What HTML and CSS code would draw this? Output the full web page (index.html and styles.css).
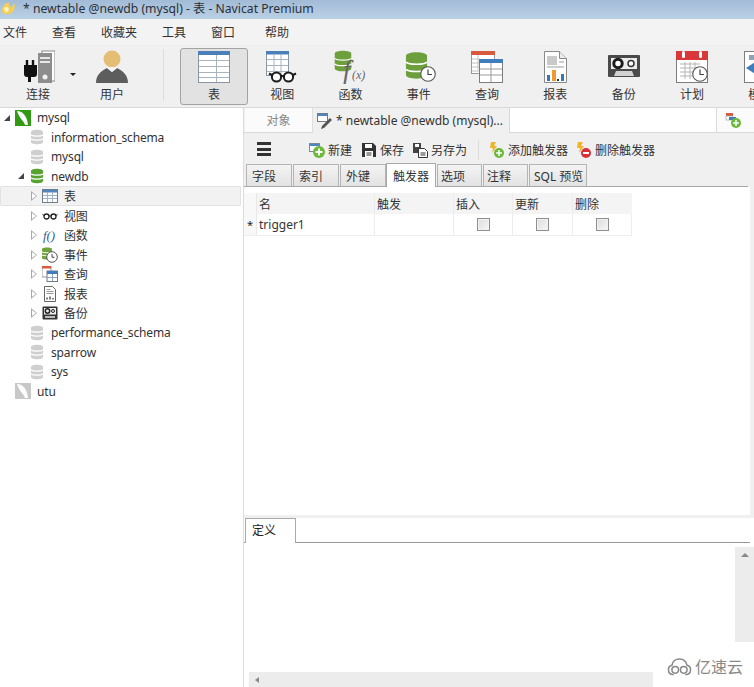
FILE: index.html
```html
<!DOCTYPE html>
<html lang="zh">
<head>
<meta charset="utf-8">
<title>Navicat Premium</title>
<link rel="stylesheet" href="styles.css">
</head>
<body>
<svg class="sprite" xmlns="http://www.w3.org/2000/svg">
  <symbol id="db" viewBox="0 0 16 16">
    <path d="M2 3c0-3 12-3 12 0v10c0 3-12 3-12 0z" fill="currentColor"/>
    <path d="M2 6c2 1.600 10 1.600 12 0M2 10c2 1.600 10 1.600 12 0" fill="none" stroke="#fff" stroke-width="1.200"/>
  </symbol>
  <symbol id="mini-table" viewBox="0 0 16 16">
    <rect x=".5" y="1.500" width="15" height="13" fill="#fff" stroke="#6f7c8a"/>
    <rect x="1" y="2" width="14" height="2.500" fill="#4f86bd"/>
    <path d="M1 7.500h14M1 10.500h14M5.500 4v10M10.500 4v10" stroke="#9fb3c8"/>
  </symbol>
  <symbol id="mini-glasses" viewBox="0 0 16 16">
    <circle cx="4.500" cy="8.500" r="2.500" fill="none" stroke="#222" stroke-width="1.300"/>
    <circle cx="11.500" cy="8.500" r="2.500" fill="none" stroke="#222" stroke-width="1.300"/>
    <path d="M7 8h2M2 7.500L.5 6.500M14 7.500l1.500-1" stroke="#222"/>
  </symbol>
  <symbol id="mini-clock" viewBox="0 0 16 16">
    <path d="M0 2c0-2 10-2 10 0v9c0 2-10 2-10 0z" fill="#6ea33c"/>
    <path d="M0 5c2 1 8 1 10 0M0 8c2 1 8 1 10 0" stroke="#fff" fill="none"/>
    <circle cx="10" cy="10" r="5.300" fill="#fff" stroke="#555"/>
    <path d="M10 7v3.300h2.500" fill="none" stroke="#444"/>
  </symbol>
  <symbol id="mini-query" viewBox="0 0 16 16">
    <rect x="0" y="0" width="9" height="11" fill="#fff" stroke="#999"/>
    <rect x="0" y="0" width="9" height="2.500" fill="#d9593f"/>
    <rect x="5" y="5" width="10.500" height="10.500" fill="#fff" stroke="#6f7c8a"/>
    <rect x="5" y="5" width="11" height="3" fill="#3f7dbd"/>
    <path d="M10.500 8v7M5 11.500h10" stroke="#8fa3b8"/>
  </symbol>
  <symbol id="mini-report" viewBox="0 0 16 16">
    <path d="M2.500.5h8l3 3v12h-11z" fill="#fff" stroke="#666"/>
    <path d="M4.500 3.500h4M4.500 5.500h7M4.500 7.500h7" stroke="#999"/>
    <path d="M5 13.500v-2M8 13.500v-3M11 13.500v-1.500" stroke="#555" stroke-width="1.500"/>
  </symbol>
  <symbol id="mini-backup" viewBox="0 0 16 16">
    <rect x=".5" y="1.500" width="15" height="13" rx="1" fill="#333"/>
    <rect x="2" y="3" width="12" height="6.500" fill="#eee"/>
    <circle cx="5.500" cy="6" r="2.200" fill="none" stroke="#222" stroke-width="1.500"/>
    <circle cx="11" cy="6" r="1.500" fill="none" stroke="#222"/>
    <rect x="3" y="11" width="10" height="2" fill="#bbb"/>
  </symbol>
  <symbol id="leaf" viewBox="0 0 16 16">
    <rect width="16" height="16" fill="currentColor"/>
    <path d="M2 1c5 0 10 4 11 14h-3C9 11 4 8 2 1z" fill="#fff"/>
  </symbol>
  <symbol id="big-db" viewBox="0 0 24 28">
    <path d="M1 4c0-5 22-5 22 0v20c0 5-22 5-22 0z" fill="#6e9f3d"/>
    <path d="M1 10.500c3 3 19 3 22 0M1 18c3 3 19 3 22 0" fill="none" stroke="#fff" stroke-width="1.600"/>
  </symbol>
  <symbol id="big-clock" viewBox="0 0 16 16">
    <circle cx="8" cy="8" r="7.300" fill="#fff" stroke="#555" stroke-width="1.100"/>
    <path d="M8 3.500V8.500h4" fill="none" stroke="#444" stroke-width="1.200"/>
  </symbol>
  <symbol id="plus" viewBox="0 0 12 12">
    <circle cx="6" cy="6" r="6" fill="#6cb83a"/>
    <path d="M6 2.500v7M2.500 6h7" stroke="#fff" stroke-width="1.800"/>
  </symbol>
</svg>

<div class="app">
  <header class="titlebar">
    <svg class="title-logo" viewBox="0 0 16 16"><path d="M1 11C1 5 5 1 9 2c-1 2 0 3 1 4 2 0 4-2 4-4 2 4 0 11-6 12-4 .5-7-1-7-3z" fill="#f1cf5a"/><path d="M3 8c2-2 4-2 5 0s-1 4-3 4" fill="#fff3bf"/></svg>
    <span class="title-text">* newtable @newdb (mysql) - 表 - Navicat Premium</span>
  </header>

  <nav class="menubar">
    <span>文件</span><span>查看</span><span>收藏夹</span><span>工具</span><span>窗口</span><span class="menu-last">帮助</span>
  </nav>

  <div class="toolbar">
    <div class="tool tool-connect">
      <svg class="tool-icon" viewBox="0 0 34 34">
        <rect x="21" y="1" width="13" height="30" fill="#fff" stroke="#8a8a8a"/>
        <rect x="17" y="3" width="14" height="30" fill="#8d8d8d"/>
        <rect x="19" y="7" width="10" height="2" fill="#e6e6e6"/>
        <rect x="19" y="11" width="10" height="2" fill="#e6e6e6"/>
        <circle cx="24" cy="27" r="2.500" fill="#f0f0f0"/>
        <path d="M3 15h13v9a3 3 0 0 1-3 3H10v5H7v-5H6a3 3 0 0 1-3-3z" fill="#111"/>
        <path d="M6 10v5M12 10v5" stroke="#111" stroke-width="2.400"/>
      </svg>
      <span>连接</span>
    </div>
    <span class="caret"></span>
    <div class="tool tool-user">
      <svg class="tool-icon" viewBox="0 0 34 34">
        <circle cx="17" cy="9" r="8.500" fill="#e5bd74"/>
        <path d="M1 33c0-8 5-12 11-15l5 4 5-4c6 3 11 7 11 15z" fill="#5d5d5d"/>
        <path d="M12 18l5 4 5-4-1.500-1h-7z" fill="#f4f4f4"/>
      </svg>
      <span>用户</span>
    </div>
    <span class="tool-sep"></span>
    <div class="tool tool-active">
      <svg class="tool-icon" viewBox="0 0 34 34">
        <rect x="1.500" y="1.500" width="31" height="31" fill="#fff" stroke="#8b96a3"/>
        <rect x="1" y="1" width="32" height="4" fill="#4a7fb8"/>
        <path d="M2 10.500h30M2 16.500h30M2 22.500h30M2 27.500h30M19.500 5v27" stroke="#a9b4bf"/>
      </svg>
      <span>表</span>
    </div>
    <div class="tool">
      <svg class="tool-icon" viewBox="0 0 34 34">
        <rect x="1.500" y="1.500" width="22" height="24" fill="#fff" stroke="#8b96a3"/>
        <rect x="1" y="1" width="23" height="3.500" fill="#4a7fb8"/>
        <path d="M2 9.500h21M2 15.500h21M2 21.500h21M9 4v21M16 4v21" stroke="#a9b4bf"/>
        <circle cx="11.500" cy="27" r="4.600" fill="#fff" stroke="#1b1b1b" stroke-width="2"/>
        <circle cx="23.500" cy="27" r="4.600" fill="#fff" stroke="#1b1b1b" stroke-width="2"/>
        <path d="M16 26h3M7 25L4 23.500M28 25l3-1.500" stroke="#1b1b1b" stroke-width="2"/>
      </svg>
      <span>视图</span>
    </div>
    <div class="tool">
      <svg class="tool-icon" viewBox="0 0 34 34">
        <use href="#big-db" x="1" y="0" width="18" height="22"/>
        <text class="fx-text" x="10" y="29">f</text>
        <text class="fx-small" x="19" y="29">(x)</text>
      </svg>
      <span>函数</span>
    </div>
    <div class="tool">
      <svg class="tool-icon" viewBox="0 0 34 34">
        <use href="#big-db" x="3" y="1" width="23" height="29"/>
        <use href="#big-clock" x="18" y="16" width="16" height="16"/>
      </svg>
      <span>事件</span>
    </div>
    <div class="tool">
      <svg class="tool-icon" viewBox="0 0 34 34">
        <rect x="1.500" y="1.500" width="23" height="22" fill="#fff" stroke="#9a9a9a"/>
        <rect x="1" y="1" width="24" height="4" fill="#d9593f"/>
        <path d="M2 9h7M2 13h7M2 17h7M2 21h7M8 5v15" stroke="#c2c2c2"/>
        <rect x="9.500" y="9.500" width="23" height="23" fill="#fff" stroke="#7d7d7d"/>
        <rect x="9" y="9" width="24" height="4" fill="#3f7dbd"/>
        <path d="M10 19h22M10 25h22M21 13v19" stroke="#9a9a9a"/>
      </svg>
      <span>查询</span>
    </div>
    <div class="tool">
      <svg class="tool-icon" viewBox="0 0 34 34">
        <path d="M6.500 1.500h15l7 7v24h-22z" fill="#fff" stroke="#8a8a8a"/>
        <path d="M21.500 1.500v7h7" fill="#ececec" stroke="#8a8a8a"/>
        <rect x="9" y="6" width="10" height="9" fill="#c9c9c9"/>
        <path d="M9 17h17M21 12h5" stroke="#bdbdbd" stroke-width="1.500"/>
        <rect x="9" y="25" width="3" height="6" fill="#2f79bb"/>
        <rect x="14" y="20" width="4" height="11" fill="#ef9a31"/>
        <rect x="19" y="29" width="2" height="2" fill="#333"/>
        <rect x="23" y="24" width="3" height="7" fill="#2f79bb"/>
      </svg>
      <span>报表</span>
    </div>
    <div class="tool">
      <svg class="tool-icon" viewBox="0 0 34 34">
        <path d="M2 5h30a1 1 0 0 1 1 1v20a1 1 0 0 1-1 1H2a1 1 0 0 1-1-1V6a1 1 0 0 1 1-1z" fill="#4a4a4a"/>
        <rect x="4" y="8" width="26" height="11" fill="#ececec"/>
        <circle cx="11" cy="13.500" r="4.200" fill="#fff" stroke="#1c1c1c" stroke-width="3"/>
        <circle cx="24" cy="13.500" r="3" fill="#fff" stroke="#333" stroke-width="1.500"/>
        <path d="M7 26l2-5h16l2 5z" fill="#d2d2d2"/>
      </svg>
      <span>备份</span>
    </div>
    <div class="tool">
      <svg class="tool-icon" viewBox="0 0 34 34">
        <rect x="1.500" y="3.500" width="31" height="29" fill="#fff" stroke="#7d7d7d"/>
        <rect x="1" y="1" width="32" height="9" fill="#d8383a"/>
        <rect x="7" y="1" width="3" height="7" rx="1.500" fill="#fff"/>
        <rect x="24" y="1" width="3" height="7" rx="1.500" fill="#fff"/>
        <path d="M5 14h20M5 18h20M5 22h20M5 26h20M10 12v17M15 12v17M20 12v17" stroke="#b5b5b5"/>
        <use href="#big-clock" x="17" y="16" width="16" height="16"/>
      </svg>
      <span>计划</span>
    </div>
    <div class="tool">
      <svg class="tool-icon" viewBox="0 0 34 34">
        <rect x="1.500" y="1.500" width="31" height="31" fill="#fff" stroke="#7d7d7d"/>
        <rect x="6" y="5" width="8" height="5" fill="#8fa3b8"/>
        <path d="M12 12l9 6-9 6-9-6z" fill="#3f7dbd"/>
      </svg>
      <span>模型</span>
    </div>
  </div>

  <main class="main">
    <aside class="tree">
      <div class="row d0"><span class="arrow open"></span><svg class="ico ico-green"><use href="#leaf"/></svg><span>mysql</span></div>
      <div class="row d1"><span class="arrow"></span><svg class="ico ico-gray"><use href="#db"/></svg><span>information_schema</span></div>
      <div class="row d1"><span class="arrow"></span><svg class="ico ico-gray"><use href="#db"/></svg><span>mysql</span></div>
      <div class="row d1"><span class="arrow open"></span><svg class="ico ico-db"><use href="#db"/></svg><span>newdb</span></div>
      <div class="row d2 row-selected"><span class="arrow closed"></span><svg class="ico"><use href="#mini-table"/></svg><span>表</span></div>
      <div class="row d2"><span class="arrow closed"></span><svg class="ico"><use href="#mini-glasses"/></svg><span>视图</span></div>
      <div class="row d2"><span class="arrow closed"></span><svg class="ico" viewBox="0 0 16 16"><text class="fx-mini" x="1" y="13">f()</text></svg><span>函数</span></div>
      <div class="row d2"><span class="arrow closed"></span><svg class="ico"><use href="#mini-clock"/></svg><span>事件</span></div>
      <div class="row d2"><span class="arrow closed"></span><svg class="ico"><use href="#mini-query"/></svg><span>查询</span></div>
      <div class="row d2"><span class="arrow closed"></span><svg class="ico"><use href="#mini-report"/></svg><span>报表</span></div>
      <div class="row d2"><span class="arrow closed"></span><svg class="ico"><use href="#mini-backup"/></svg><span>备份</span></div>
      <div class="row d1"><span class="arrow"></span><svg class="ico ico-gray"><use href="#db"/></svg><span>performance_schema</span></div>
      <div class="row d1"><span class="arrow"></span><svg class="ico ico-gray"><use href="#db"/></svg><span>sparrow</span></div>
      <div class="row d1"><span class="arrow"></span><svg class="ico ico-gray"><use href="#db"/></svg><span>sys</span></div>
      <div class="row d0"><span class="arrow"></span><svg class="ico ico-conn"><use href="#leaf"/></svg><span>utu</span></div>
    </aside>

    <section class="pane">
      <div class="doc-tabs">
        <div class="doc-tab doc-object">对象</div>
        <div class="doc-tab doc-active">
          <svg class="doc-ico" viewBox="0 0 16 16">
            <rect x=".5" y=".5" width="10" height="8" fill="#fff" stroke="#6f7c8a"/>
            <rect x="1" y="1" width="9" height="2" fill="#4f86bd"/>
            <path d="M13 5l2 2-8 8-3 1 1-3z" fill="#555"/>
          </svg>
          <span>* newtable @newdb (mysql)...</span>
        </div>
        <div class="doc-blank"></div>
        <div class="doc-add">
          <svg class="add-ico" viewBox="0 0 16 16">
            <rect x="1" y="1" width="7" height="3" fill="#d9593f"/>
            <rect x="1" y="4" width="7" height="4" fill="#fff" stroke="#999" stroke-width=".6"/>
            <rect x="4" y="5" width="7" height="3" fill="#3f7dbd"/>
            <use href="#plus" x="6" y="6" width="10" height="10"/>
          </svg>
        </div>
      </div>

      <div class="actions">
        <div class="hamburger"><i></i><i></i><i></i></div>
        <div class="action act-new">
          <svg class="act-ico" viewBox="0 0 16 16">
            <rect x=".5" y="1.500" width="10" height="8" fill="#fff" stroke="#7b8a99"/>
            <rect x="1" y="2" width="9" height="2" fill="#4f86bd"/>
            <use href="#plus" x="4" y="4" width="12" height="12"/>
          </svg>
          <span>新建</span>
        </div>
        <div class="action act-save">
          <svg class="act-ico" viewBox="0 0 16 16">
            <path d="M1 1h11l3 3v11H1z" fill="#333"/>
            <rect x="4" y="2" width="7" height="4" fill="#fff"/>
            <rect x="4" y="9" width="8" height="6" fill="#fff"/>
            <path d="M5.500 11h5M5.500 13h5" stroke="#333"/>
          </svg>
          <span>保存</span>
        </div>
        <div class="action act-saveas">
          <svg class="act-ico" viewBox="0 0 16 16">
            <path d="M1 1h8v10H1z" fill="#444"/>
            <rect x="3" y="2" width="4" height="3" fill="#fff"/>
            <path d="M6.500 6.500h6l3 3v6h-9z" fill="#fff" stroke="#333"/>
            <path d="M8.500 11h5M8.500 13h5" stroke="#333"/>
          </svg>
          <span>另存为</span>
        </div>
        <span class="act-sep"></span>
        <div class="action act-add">
          <svg class="act-ico" viewBox="0 0 16 16">
            <path d="M2 0h5L5 4h3L3 11l1-5H1z" fill="#f0b429"/>
            <use href="#plus" x="5" y="6" width="10" height="10"/>
          </svg>
          <span>添加触发器</span>
        </div>
        <div class="action act-del">
          <svg class="act-ico" viewBox="0 0 16 16">
            <path d="M2 0h5L5 4h3L3 11l1-5H1z" fill="#f0b429"/>
            <circle cx="10" cy="11" r="5" fill="#d8313a"/>
            <rect x="7" y="10" width="6" height="2" fill="#fff"/>
          </svg>
          <span>删除触发器</span>
        </div>
      </div>

      <div class="subtabs">
        <div class="subtab">字段</div>
        <div class="subtab">索引</div>
        <div class="subtab">外键</div>
        <div class="subtab subtab-active">触发器</div>
        <div class="subtab subtab-narrow">选项</div>
        <div class="subtab subtab-narrow">注释</div>
        <div class="subtab subtab-sql">SQL 预览</div>
      </div>

      <div class="grid-area">
        <div class="grid grid-head">
          <div class="gutter"></div>
          <div class="cell">名</div>
          <div class="cell">触发</div>
          <div class="cell">插入</div>
          <div class="cell">更新</div>
          <div class="cell">删除</div>
        </div>
        <div class="grid grid-row">
          <div class="gutter">*</div>
          <div class="cell">trigger1</div>
          <div class="cell"></div>
          <div class="cell cell-check"><span class="check"></span></div>
          <div class="cell cell-check"><span class="check"></span></div>
          <div class="cell cell-check"><span class="check"></span></div>
        </div>
      </div>

      <div class="def-panel">
        <div class="def-tabs"><div class="def-tab">定义</div></div>
        <div class="def-body">
          <div class="def-main">
            <div class="def-spacer"></div>
            <div class="hscroll"><span class="tri-left"></span></div>
          </div>
          <div class="def-side">
            <div class="vscroll"><span class="tri-up"></span></div>
          </div>
        </div>
        <div class="watermark">
          <svg class="wm-ico" viewBox="0 0 26 19">
            <path d="M7 17.500H6a5 5 0 0 1-1-9.800C5.500 3.500 9 1 13 1s7 2.500 8 6.700a5 5 0 0 1-1 9.800h-1" fill="none" stroke="#888" stroke-width="1.600"/>
            <circle cx="8.500" cy="12.500" r="3.500" fill="none" stroke="#888" stroke-width="1.600"/>
            <circle cx="17.500" cy="12.500" r="3.500" fill="none" stroke="#888" stroke-width="1.600"/>
          </svg>
          <span>亿速云</span>
        </div>
      </div>
    </section>
  </main>
</div>
</body>
</html>
```

FILE: styles.css
```css
* { box-sizing: border-box; }

html, body {
  margin: 0;
  padding: 0;
  height: 100%;
  overflow: hidden;
}

body {
  font-family: "Noto Sans", "Noto Sans CJK SC", sans-serif;
  font-size: 12px;
  color: #333;
  background: #f0f0f0;
}

.sprite { display: none; }

.app {
  width: 754px;
  height: 687px;
  display: flex;
  flex-direction: column;
  overflow: hidden;
}

/* title bar */
.titlebar {
  height: 19px;
  flex: none;
  display: flex;
  align-items: center;
  gap: 7px;
  padding: 0 0 3px 1px;
  background: linear-gradient(180deg, #a2bbd6 0%, #bad0e5 100%);
  color: #2a3038;
}

.title-logo { width: 15px; height: 15px; flex: none; }
.title-text { font-size: 12.2px; white-space: nowrap; }

/* menu */
.menubar {
  height: 26px;
  flex: none;
  display: flex;
  align-items: center;
  gap: 25px;
  padding: 0 0 0 3px;
  background: #f3f3f3;
  color: #333;
}

.menu-last { margin-left: 5px; }

/* main toolbar */
.toolbar {
  height: 63px;
  flex: none;
  display: flex;
  align-items: flex-start;
  padding: 3px 0 0 4px;
  background: #f0f0f0;
  border-bottom: 1px solid #d9d9d9;
  overflow: hidden;
}

.tool {
  width: 68.3px;
  height: 57px;
  flex: none;
  display: flex;
  flex-direction: column;
  align-items: center;
  gap: 0.5px;
  padding-top: 2px;
  color: #333;
}

.tool-connect { width: 68px; }
.tool-user { width: 68px; margin-left: 8px; }
.tool-active {
  width: 68px;
  background: #e2e2e2;
  border: 1px solid #a3a3a3;
  border-radius: 3px;
  padding-top: 1px;
}

.tool-icon { width: 34px; height: 34px; flex: none; }

.caret {
  width: 0;
  height: 0;
  flex: none;
  margin-top: 25px;
  margin-right: -6px;
  margin-left: -2px;
  border-left: 3px solid transparent;
  border-right: 3px solid transparent;
  border-top: 3px solid #222;
}

.tool-sep {
  width: 1px;
  height: 52px;
  flex: none;
  margin: 1px 16px 0 17px;
  background: #dcdcdc;
}

.fx-text {
  font-family: "Liberation Serif", serif;
  font-style: italic;
  font-size: 27px;
  fill: #666;
}

.fx-small {
  font-family: "Liberation Serif", serif;
  font-style: italic;
  font-size: 12px;
  fill: #666;
}

.fx-mini {
  font-family: "Liberation Serif", serif;
  font-style: italic;
  font-size: 13px;
  fill: #2f5e96;
}

/* main split */
.main {
  flex: 1;
  min-height: 0;
  display: flex;
}

/* tree */
.tree {
  width: 244px;
  flex: none;
  background: #fff;
  border-right: 1px solid #dcdcdc;
  color: #333;
  letter-spacing: -0.15px;
}

.row {
  height: 19.55px;
  display: flex;
  align-items: center;
  white-space: nowrap;
}

.d0 { padding-left: 2px; }
.d1 { padding-left: 16px; }
.d2 { padding-left: 29px; }

.row-selected {
  background: #f2f2f2;
  box-shadow: inset 0 0 0 1px #e2e2e2;
  width: 241px;
  border-radius: 2px;
}

.arrow {
  width: 13px;
  flex: none;
  display: flex;
  align-items: center;
  justify-content: center;
}

.arrow.open::before {
  content: "";
  width: 0;
  height: 0;
  margin-left: -3px;
  border-style: solid;
  border-width: 0 0 6px 6px;
  border-color: transparent transparent #444 transparent;
}

.arrow.closed::before {
  content: "";
  width: 0;
  height: 0;
  margin-left: -4px;
  border-style: solid;
  border-width: 5px 0 5px 6px;
  border-color: transparent transparent transparent #a8a8a8;
}

.arrow.closed::after {
  content: "";
  width: 0;
  height: 0;
  margin-left: -5px;
  border-style: solid;
  border-width: 3.5px 0 3.5px 4px;
  border-color: transparent transparent transparent #fff;
}

.ico {
  width: 16px;
  height: 16px;
  flex: none;
  margin-right: 6px;
}

.ico-green { color: #2f9a12; }
.ico-gray { color: #cfcfcf; }
.ico-db { color: #57a332; }
.ico-conn { color: #c8c8c8; }

/* right pane */
.pane {
  flex: 1;
  min-width: 0;
  display: flex;
  flex-direction: column;
  background: #f0f0f0;
}

.doc-tabs {
  height: 25px;
  flex: none;
  display: flex;
  padding-left: 1px;
  border-bottom: 1px solid #d8d8d8;
}

.doc-tab {
  display: flex;
  align-items: center;
  white-space: nowrap;
}

.doc-object {
  width: 68px;
  justify-content: center;
  background: #fbfbfb;
  color: #888;
  border-right: 1px solid #dedede;
}

.doc-active {
  width: 196px;
  gap: 3px;
  padding-left: 4px;
  margin-bottom: -1px;
  background: #f0f0f0;
  color: #333;
}

.doc-ico { width: 16px; height: 16px; flex: none; }

.doc-blank {
  width: 207px;
  flex: none;
  background: #fff;
  border-left: 1px solid #d8d8d8;
}

.doc-add {
  flex: 1;
  display: flex;
  align-items: center;
  padding-left: 8px;
  background: #fbfbfb;
  border-left: 1px solid #d8d8d8;
}

.add-ico { width: 16px; height: 16px; }

/* action bar */
.actions {
  height: 32px;
  flex: none;
  display: flex;
  align-items: center;
  padding: 2px 0 0 13px;
}

.hamburger {
  width: 14px;
  flex: none;
  display: flex;
  flex-direction: column;
  gap: 2.5px;
  margin-right: 38px;
  margin-bottom: 2px;
}

.hamburger i {
  display: block;
  height: 3px;
  background: #333;
}

.action {
  display: flex;
  align-items: center;
  gap: 3px;
  white-space: nowrap;
  color: #333;
  flex: none;
}

.act-ico { width: 16px; height: 16px; flex: none; }
.act-new { margin-right: 9px; }
.act-save { margin-right: 8px; }
.act-saveas { margin-right: 11px; }
.act-add { margin-right: 8px; }

.act-sep {
  width: 1px;
  height: 20px;
  flex: none;
  margin-right: 10px;
  background: #dcdcdc;
}

/* sub tabs */
.subtabs {
  height: 24px;
  flex: none;
  display: flex;
  align-items: flex-end;
  gap: 1px;
  margin-top: -2px;
  margin-right: 6px;
  padding-left: 2px;
  border-bottom: 1px solid #a8a8a8;
}

.subtab {
  width: 46px;
  height: 22px;
  flex: none;
  display: flex;
  align-items: center;
  padding-left: 5px;
  background: linear-gradient(180deg, #f4f4f4, #e2e2e2);
  border: 1px solid #b4b4b4;
  border-bottom: 0;
  white-space: nowrap;
}

.subtab-active {
  width: 50px;
  height: 24px;
  margin: 0 0 -1px -1px;
  padding-left: 6px;
  background: #fff;
  border-color: #a8a8a8;
}

.subtab-narrow { width: 45px; padding-left: 3px; }
.subtab-sql { width: 58px; padding-left: 4px; }

/* grid */
.grid-area {
  flex: 1;
  min-height: 0;
  margin-right: 4px;
  padding-top: 6px;
  background: #fff;
}

.grid {
  display: grid;
  grid-template-columns: 13px 118px 79px 59px 60px 59px;
  width: 388px;
}

.grid-head {
  height: 21px;
  background: #f4f4f4;
}

.grid-row {
  height: 22px;
  border-bottom: 1px solid #eee;
  border-right: 1px solid #eee;
}

.gutter {
  display: flex;
  align-items: center;
  justify-content: center;
  color: #222;
  background: #f8f8f8;
  border-right: 1px solid #e8e8e8;
  font-size: 11px;
}

.cell {
  display: flex;
  align-items: center;
  padding-left: 2px;
  border-right: 1px solid #ececec;
  white-space: nowrap;
}

.cell:last-child { border-right: 0; }

.grid-row .cell { color: #333; }

.cell-check {
  justify-content: center;
  padding-left: 0;
}

.check {
  width: 13px;
  height: 13px;
  border: 1px solid #8e8e8e;
  background: linear-gradient(135deg, #dcdcdc, #f7f7f7);
  box-shadow: inset 0 0 0 1px #f2f2f2;
}

/* definition panel */
.def-panel {
  height: 169px;
  flex: none;
  position: relative;
  margin-top: 3px;
  display: flex;
  flex-direction: column;
  background: #fff;
  overflow: hidden;
}

.def-tabs {
  height: 25px;
  flex: none;
  display: flex;
  border-bottom: 1px solid #999;
  padding-left: 1px;
  margin-right: 4px;
}

.def-tab {
  width: 51px;
  height: 25px;
  display: flex;
  align-items: center;
  padding: 0 0 2px 6px;
  background: #fff;
  border: 1px solid #aaa;
  border-bottom: 0;
  color: #222;
}

.def-body {
  flex: 1;
  min-height: 0;
  display: flex;
}

.def-main {
  flex: 1;
  min-width: 0;
  display: flex;
  flex-direction: column;
  padding-left: 5px;
}

.def-spacer { flex: 1; }

.hscroll {
  width: 404px;
  height: 15px;
  flex: none;
  display: flex;
  align-items: center;
  padding-left: 6px;
  background: #ececec;
}

.tri-left {
  width: 0;
  height: 0;
  border-style: solid;
  border-width: 3px 4px 3px 0;
  border-color: transparent #888 transparent transparent;
}

.def-side {
  width: 19px;
  flex: none;
  padding-top: 4px;
}

.vscroll {
  height: 95px;
  display: flex;
  justify-content: center;
  padding-top: 6px;
  background: #ececec;
}

.tri-up {
  width: 0;
  height: 0;
  border-style: solid;
  border-width: 0 4px 4px 4px;
  border-color: transparent transparent #888 transparent;
}

.watermark {
  position: absolute;
  right: 11px;
  bottom: 10px;
  display: flex;
  align-items: center;
  gap: 3px;
  color: #888;
  font-size: 16px;
  line-height: 20px;
}

.wm-ico { width: 25px; height: 18px; }
```
